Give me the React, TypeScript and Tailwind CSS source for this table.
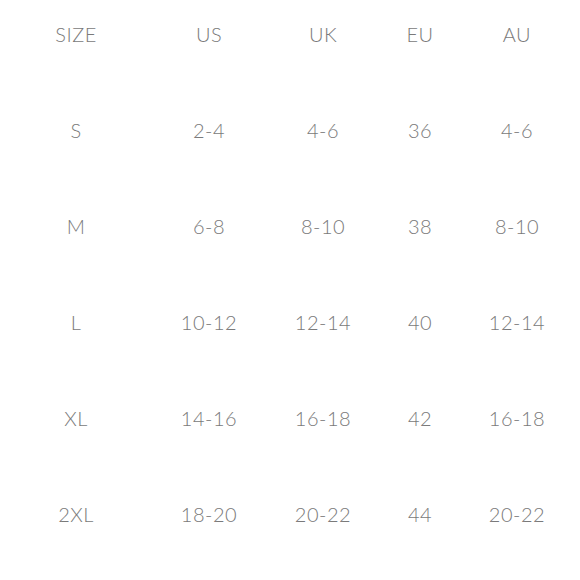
const HEAD = ['SIZE', 'US', 'UK', 'EU', 'AU'];

const ROWS = [
  ['S', '2-4', '4-6', '36', '4-6'],
  ['M', '6-8', '8-10', '38', '8-10'],
  ['L', '10-12', '12-14', '40', '12-14'],
  ['XL', '14-16', '16-18', '42', '16-18'],
  ['2XL', '18-20', '20-22', '44', '20-22'],
];

export default function App() {
  return (
    <div className="w-[580px] h-[580px] bg-white pt-[22px] font-['Lato',sans-serif] font-light text-[20px] text-[#7a7a7a]">
      <div className="flex flex-col gap-[72px]">
        {[HEAD, ...ROWS].map((row, i) => (
          <div key={i} className="grid grid-cols-[152px_114px_114px_80px_114px] h-6 items-center leading-6">
            {row.map((cell, j) => (
              <div key={j} className="text-center tracking-[0.5px]">{cell}</div>
            ))}
          </div>
        ))}
      </div>
    </div>
  );
}
